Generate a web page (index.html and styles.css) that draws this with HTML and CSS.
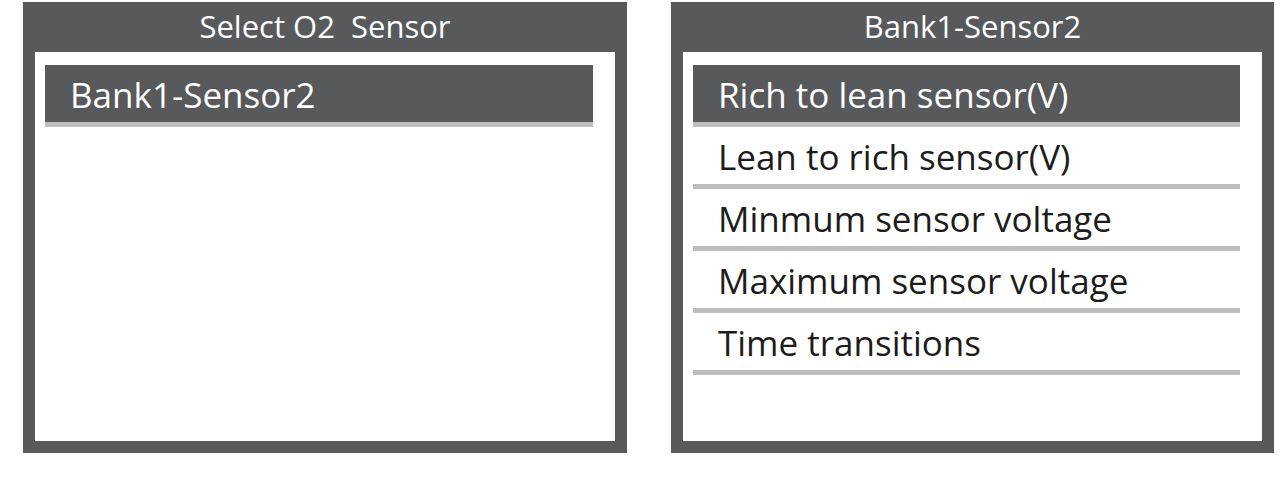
FILE: index.html
```html
<!DOCTYPE html>
<html>
<head>
<meta charset="utf-8">
<link rel="stylesheet" href="styles.css">
</head>
<body>
<div class="screens">
  <section class="panel panel-left">
    <header class="panel-title">Select O2&nbsp;&nbsp;Sensor</header>
    <div class="panel-body">
      <ul class="menu">
        <li class="item selected">Bank1-Sensor2</li>
      </ul>
    </div>
  </section>
  <section class="panel panel-right">
    <header class="panel-title">Bank1-Sensor2</header>
    <div class="panel-body">
      <ul class="menu">
        <li class="item selected">Rich to lean sensor(V)</li>
        <li class="item">Lean to rich sensor(V)</li>
        <li class="item">Minmum sensor voltage</li>
        <li class="item">Maximum sensor voltage</li>
        <li class="item">Time transitions</li>
      </ul>
    </div>
  </section>
</div>
</body>
</html>
```

FILE: styles.css
```css
html, body {
  margin: 0;
  padding: 0;
  background: #ffffff;
}

body {
  font-family: "Open Sans", "Noto Sans", "DejaVu Sans", sans-serif;
}

.screens {
  display: flex;
  gap: 44px;
  padding: 2px 0 0 23px;
}

.panel {
  display: flex;
  flex-direction: column;
  height: 451px;
  background: #58595b;
  padding: 0 12px 12px 12px;
  box-sizing: border-box;
}

.panel-left {
  width: 604px;
}

.panel-right {
  width: 603px;
}

.panel-title {
  height: 50px;
  line-height: 48px;
  text-align: center;
  color: #ffffff;
  font-size: 31px;
  white-space: pre;
}

.panel-body {
  flex: 1;
  background: #ffffff;
  padding: 13px 22px 0 10px;
}

.menu {
  list-style: none;
  margin: 0;
  padding: 0;
}

.item {
  height: 57px;
  line-height: 59px;
  padding-left: 25px;
  font-size: 35px;
  color: #1c1c1c;
  border-bottom: 5px solid #bdbdbd;
  white-space: nowrap;
}

.item.selected {
  background: #58595b;
  color: #ffffff;
}
```
